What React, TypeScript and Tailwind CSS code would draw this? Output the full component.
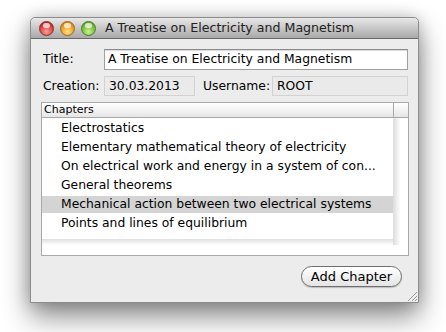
import React from "react";

const chapters = [
  "Electrostatics",
  "Elementary mathematical theory of electricity",
  "On electrical work and energy in a system of con...",
  "General theorems",
  "Mechanical action between two electrical systems",
  "Points and lines of equilibrium",
];

function Light({ from, to, border }: { from: string; to: string; border: string }) {
  return (
    <div
      className="w-[15px] h-[15px] rounded-full relative"
      style={{
        background: `radial-gradient(circle at 50% 75%, ${to} 0%, ${from} 80%)`,
        border: `1px solid ${border}`,
      }}
    >
      <div className="absolute left-[3px] top-[1px] w-[7px] h-[5px] rounded-full bg-white/70" />
    </div>
  );
}

export default function App() {
  return (
    <div
      className="w-[446px] h-[332px] bg-white pl-[30px] pt-[17px] overflow-hidden"
      style={{ fontFamily: '"DejaVu Sans", "Liberation Sans", sans-serif' }}
    >
      <div className="w-[389px] h-[286px] flex flex-col rounded-t-[5px] border border-[#8c8c8c] bg-[#ececec] shadow-[0_14px_28px_rgba(0,0,0,0.45),0_0_16px_rgba(0,0,0,0.2)]">
        {/* Title bar */}
        <div className="h-[21px] shrink-0 flex items-center rounded-t-[5px] bg-gradient-to-b from-[#e8e8e8] to-[#a9a9a9] border-b border-[#6a6a6a] pl-[8px]">
          <div className="flex gap-[6px]">
            <Light from="#c2221f" to="#ff9c95" border="#8d2a26" />
            <Light from="#d9820e" to="#ffe27a" border="#9b6b1c" />
            <Light from="#5aa421" to="#c5f28e" border="#4d7d23" />
          </div>
          <div className="ml-[9px] text-[12.6px] text-[#222] leading-none">
            A Treatise on Electricity and Magnetism
          </div>
        </div>

        {/* Body */}
        <div className="flex-1 flex flex-col px-[10px] pt-[10px] text-[12.35px] text-black">
          <div className="flex items-center h-[21px]">
            <div className="w-[63px] pl-[2px]">Title:</div>
            <div className="flex-1 h-[21px] bg-white border border-[#a0a0a0] border-t-[#8a8a8a] flex items-center pl-[3px] shadow-[inset_0_1px_1px_rgba(0,0,0,0.15)]">
              A Treatise on Electricity and Magnetism
            </div>
          </div>
          <div className="flex items-center h-[20px] mt-[6px]">
            <div className="w-[63px] pl-[2px]">Creation:</div>
            <div className="w-[91px] h-[20px] bg-[#eaeaea] border border-[#d2d2d2] flex items-center pl-[4px]">
              30.03.2013
            </div>
            <div className="ml-[8px] w-[69px]">Username:</div>
            <div className="flex-1 h-[20px] bg-[#eaeaea] border border-[#d2d2d2] flex items-center pl-[4px]">
              ROOT
            </div>
          </div>

          {/* Table */}
          <div className="mt-[6px] h-[154px] w-[368px] border border-[#a8a8a8] bg-white flex flex-col">
            <div className="h-[15px] shrink-0 flex border-b border-[#a8a8a8] bg-gradient-to-b from-white to-[#e6e6e6]">
              <div className="flex-1 text-[11px] leading-[14px] pl-[2px]">Chapters</div>
              <div className="w-[15px] border-l border-[#a8a8a8]" />
            </div>
            <div className="flex-1 flex">
              <div className="flex-1 flex flex-col">
                <div className="flex flex-col pt-[1px]">
                  {chapters.map((c, i) => (
                    <div key={c} className="h-[19px] flex items-center">
                      <div
                        className={
                          "w-full h-[17px] flex items-center pl-[19px] " +
                          (i === 4 ? "bg-[#d4d4d4]" : "")
                        }
                      >
                        {c}
                      </div>
                    </div>
                  ))}
                </div>
                <div className="h-[6px] mt-[6px] bg-gradient-to-b from-[#dedede] to-white" />
              </div>
              <div className="w-[15px] flex flex-col">
                <div className="h-[127px] bg-gradient-to-r from-[#dcdcdc] via-white to-white" />
              </div>
            </div>
          </div>

          <div className="flex justify-end mt-[10px] pr-[6px]">
            <div className="w-[101px] h-[21px] rounded-full border border-[#6e6e6e] bg-gradient-to-b from-white to-[#e4e4e4] shadow-[0_1px_1px_rgba(0,0,0,0.2)] flex items-center justify-center text-[13px]">
              Add Chapter
            </div>
          </div>
          <div className="flex-1 flex justify-end items-end pb-[1px] -mr-[9px]">
            <svg width="10" height="10" viewBox="0 0 10 10">
              <line x1="1" y1="10" x2="10" y2="1" stroke="#9a9a9a" strokeWidth="1" />
              <line x1="5" y1="10" x2="10" y2="5" stroke="#9a9a9a" strokeWidth="1" />
              <line x1="8" y1="10" x2="10" y2="8" stroke="#9a9a9a" strokeWidth="1" />
            </svg>
          </div>
        </div>
      </div>
    </div>
  );
}
